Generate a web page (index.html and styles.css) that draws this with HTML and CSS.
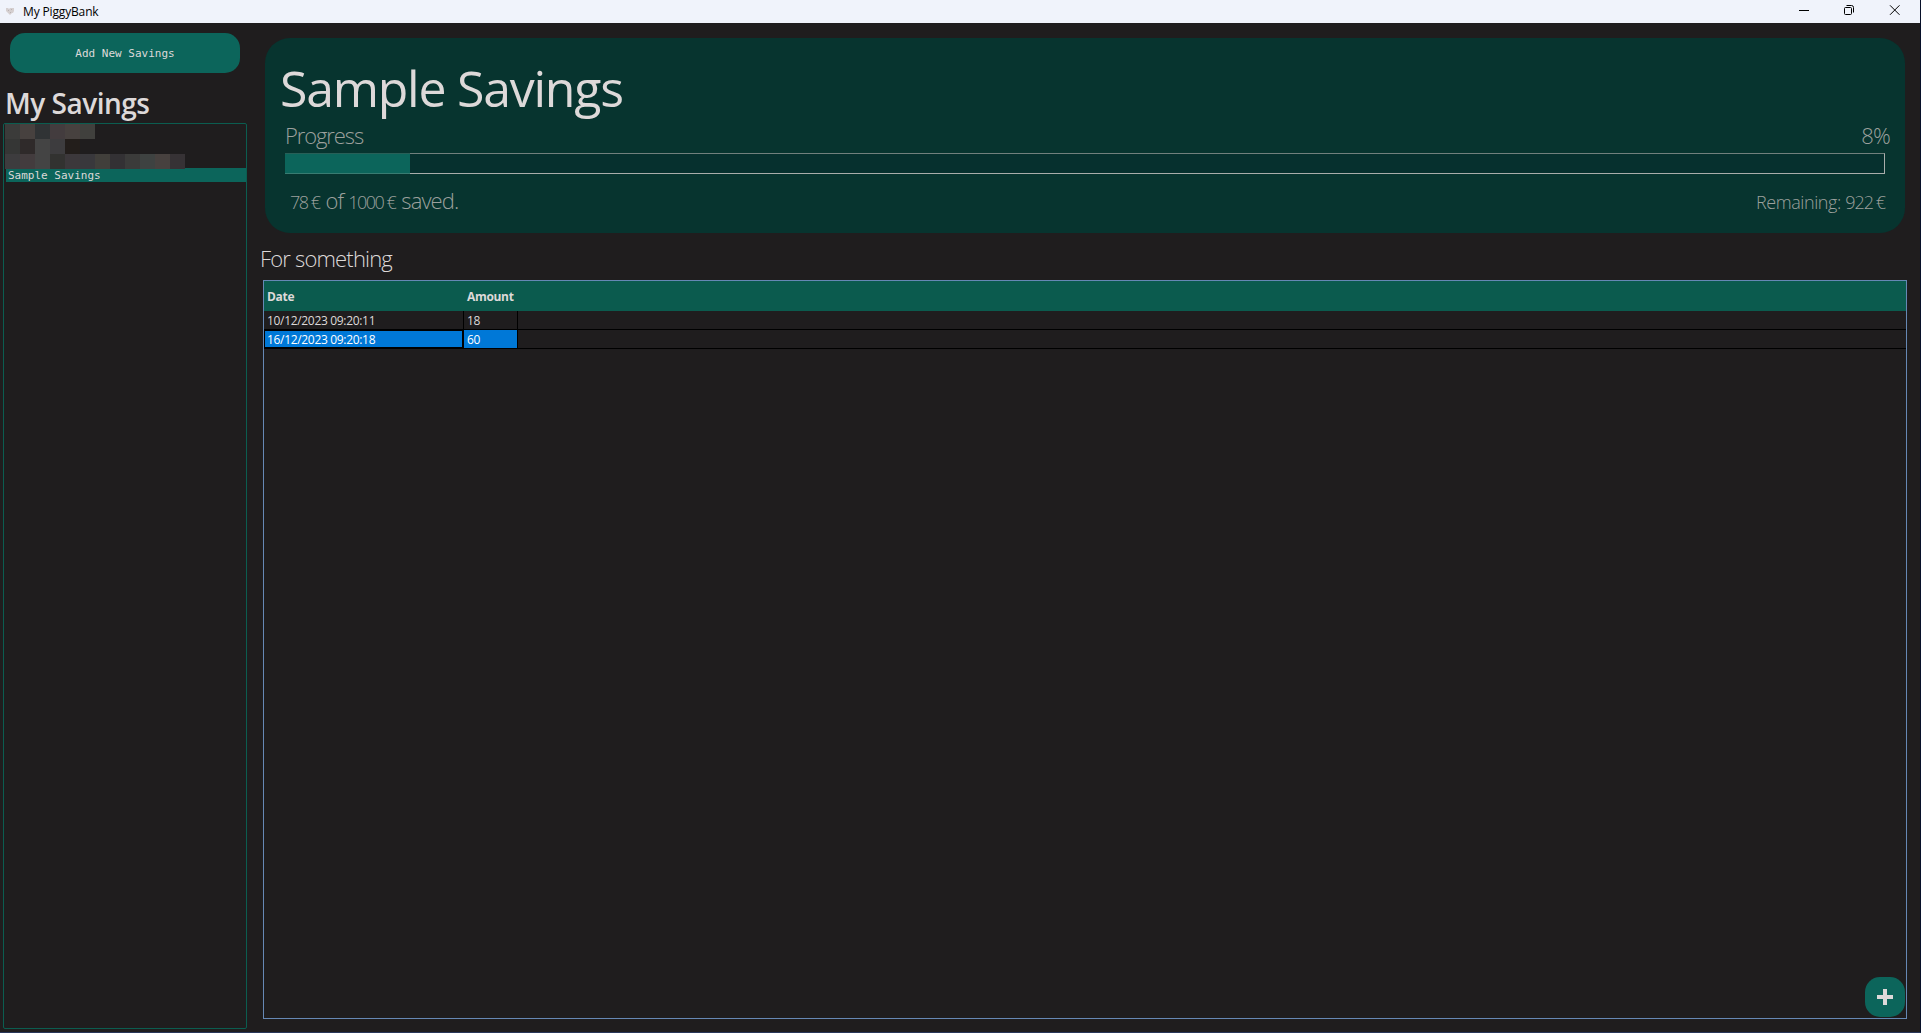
FILE: index.html
```html
<!DOCTYPE html>
<html lang="en">
<head>
<meta charset="utf-8">
<title>My PiggyBank</title>
<link rel="stylesheet" href="styles.css">
</head>
<body>
<div class="window">
  <header class="titlebar">
    <svg class="app-icon" width="10" height="8" viewBox="0 0 10 8"><path d="M1 1h2l1 1 1-1h4v3L8 6H7L5 8 3 6 1 4z" fill="#d5cfd0"/><path d="M3 3h1v1H3zM6 2h1v1H6zM5 5h1v1H5z" fill="#b9b2b3"/></svg>
    <span class="app-name">My PiggyBank</span>
    <div class="controls">
      <svg width="46" height="23" viewBox="0 0 46 23"><path d="M18 10.500h10" stroke="#000"/></svg>
      <svg width="46" height="23" viewBox="0 0 46 23" fill="none" stroke="#000"><rect x="17.5" y="7.5" width="7" height="7" rx="1"/><path d="M19.5 5.5h5q2 0 2 2v5"/></svg>
      <svg width="46" height="23" viewBox="0 0 46 23"><path d="M17 5.300l9.500 9.500M26.500 5.300l-9.500 9.500" stroke="#000"/></svg>
    </div>
  </header>
  <div class="body">
    <aside class="sidebar">
      <button class="add">Add New Savings</button>
      <h2 class="side-title">My Savings</h2>
      <div class="list">
        <div class="mosaic"><i class="a"></i><i class="b"></i><i class="c"></i><i class="d"></i><i class="b"></i><i class="e"></i></div>
        <div class="mosaic"><i class="f"></i><i class="g"></i><i class="h"></i><i class="i"></i><i class="j"></i></div>
        <div class="mosaic"><i class="i"></i><i class="d"></i><i class="h"></i><i class="k"></i><i class="l"></i><i class="m"></i><i class="n"></i><i class="o"></i><i class="a"></i><i class="p"></i><i class="b"></i><i class="q"></i></div>
        <div class="item">Sample Savings</div>
      </div>
    </aside>
    <main class="main">
      <section class="card">
        <h1 class="name">Sample Savings</h1>
        <div class="row progress-row"><span class="progress-label">Progress</span><span class="percent">8%</span></div>
        <div class="bar"><div class="fill" style="width:125px"></div></div>
        <div class="row totals"><div class="saved"><span class="sum s1">78 €</span><span class="word w1">of</span><span class="sum s2">1000 €</span><span class="word w2">saved.</span></div><span class="remaining">Remaining: <span class="left">922 €</span></span></div>
      </section>
      <p class="description">For something</p>
      <section class="grid">
        <div class="grid-row head"><span class="date">Date</span><span class="amount">Amount</span></div>
        <div class="grid-row"><span class="date">10/12/2023 09:20:11</span><span class="amount">18</span></div>
        <div class="grid-row selected"><span class="date">16/12/2023 09:20:18</span><span class="amount">60</span></div>
        <button class="plus"><svg width="16" height="16" viewBox="0 0 16 16"><path d="M6 0h4v6h6v4h-6v6H6v-6H0V6h6z" fill="#ddd9d9"/></svg></button>
      </section>
    </main>
  </div>
</div>
</body>
</html>
```
FILE: styles.css
```css
* { box-sizing: border-box; }
body { margin: 0; background: #1f1d1e; font-family: "Open Sans", "Noto Sans", sans-serif; color: #ddd9d9; overflow: hidden; }
h1, h2, p { margin: 0; font-weight: 400; white-space: nowrap; }
button { border: 0; padding: 0; color: inherit; }
.window { width: 1921px; height: 1033px; display: flex; flex-direction: column; border-right: 1px solid #071029; border-bottom: 1px solid #29375a; }
.titlebar { height: 23px; background: #f0f3fb; color: #000; display: flex; align-items: flex-start; padding-left: 5px; flex: none; }
.app-icon { margin: 7px 8px 0 0; }
.app-name { font-size: 12px; line-height: 24px; letter-spacing: -0.15px; }
.controls { margin-left: auto; display: flex; margin-right: 1px; }
.body { flex: 1; display: flex; min-height: 0; }
.sidebar { width: 247px; padding: 10px 0 3px 3px; display: flex; flex-direction: column; flex: none; }
.add { width: 230px; height: 40px; margin-left: 7px; padding-top: 1px; border-radius: 15px; background: #0c655b; font: 11px/39px "DejaVu Sans Mono", monospace; flex: none; }
.side-title { height: 50px; padding-left: 2px; font-size: 28px; line-height: 60px; font-weight: 600; letter-spacing: -0.5px; flex: none; }
.list { flex: 1; border: 1px solid #0b5d50; border-radius: 2px; padding-left: 1px; }
.mosaic { display: flex; height: 15px; }
.mosaic i { width: 15px; height: 15px; }
.mosaic .a { background: #3b3b3a; } .mosaic .b { background: #47413f; } .mosaic .c { background: #303335; }
.mosaic .d { background: #433c3e; } .mosaic .e { background: #40403d; } .mosaic .f { background: #353635; }
.mosaic .g { background: #2f2a2a; } .mosaic .h { background: #444444; } .mosaic .i { background: #3d3c3e; }
.mosaic .j { background: #231e1b; } .mosaic .k { background: #323230; } .mosaic .l { background: #3c383b; }
.mosaic .m { background: #39383c; } .mosaic .n { background: #413f3b; } .mosaic .o { background: #333134; }
.mosaic .p { background: #3e4241; } .mosaic .q { background: #363235; }
.item { margin: -1px 0 0 1px; height: 14px; padding-left: 2px; background: #0c655b; font: 11px/16px "DejaVu Sans Mono", monospace; }
.main { flex: 1; padding: 15px 13px 13px 16px; display: flex; flex-direction: column; min-width: 0; }
.card { width: 1640px; height: 195px; margin-left: 2px; border-radius: 25px; background: #07342f; padding: 20px 20px 0; flex: none; }
.name { font-size: 50px; line-height: 60px; height: 62px; margin-left: -5px; letter-spacing: -1.25px; }
.row { display: flex; justify-content: space-between; font-weight: 300; color: #9ca09d; white-space: nowrap; }
.progress-row { height: 33px; font-size: 22px; line-height: 30px; margin-right: -5px; }
.progress-label { letter-spacing: -1.1px; }
.percent { letter-spacing: -0.8px; }
.bar { height: 21px; width: 1600px; border: 1px solid #a9adab; border-top-color: #71807d; background: #06302e; }
.fill { height: 21px; margin: -1px 0 0 -1px; background: #0c655b; border-top: 1px solid #285f57; border-bottom: 1px solid #397c72; }
.totals { height: 50px; line-height: 52px; }
.saved { display: flex; align-items: baseline; padding-left: 5px; }
.sum, .remaining { font-size: 18px; }
.sum { letter-spacing: -1.5px; }
.word { font-size: 22px; letter-spacing: -0.9px; }
.w1, .w2 { margin-left: 6px; }
.s2 { margin-left: 5px; }
.remaining { line-height: 57px; letter-spacing: -0.4px; }
.left { letter-spacing: -1px; word-spacing: -1px; }
.description { height: 47px; font-size: 22px; line-height: 50px; font-weight: 300; margin-left: -3px; letter-spacing: -0.82px; }
.grid { flex: 1; border: 1px solid #6688b4; position: relative; font-size: 12px; letter-spacing: -0.32px; }
.grid-row { display: flex; height: 19px; border-bottom: 1px solid #000; line-height: 19px; white-space: nowrap; }
.grid-row span { border-right: 1px solid #000; padding-left: 3px; height: 18px; }
.date { width: 200px; }
.amount { width: 54px; }
.head { height: 30px; border: 0; background: #0b5b4e; line-height: 32px; font-weight: 700; }
.head span { border: 0; height: 30px; }
.selected span { background: #0078d7; color: #fff; }
.selected .date { border: 1px solid #000; border-right-width: 2px; padding-left: 2px; line-height: 17px; }
.plus { position: absolute; right: 1px; bottom: 1px; width: 40px; height: 40px; border-radius: 15px; background: #0c655b; display: flex; align-items: center; justify-content: center; }
```
